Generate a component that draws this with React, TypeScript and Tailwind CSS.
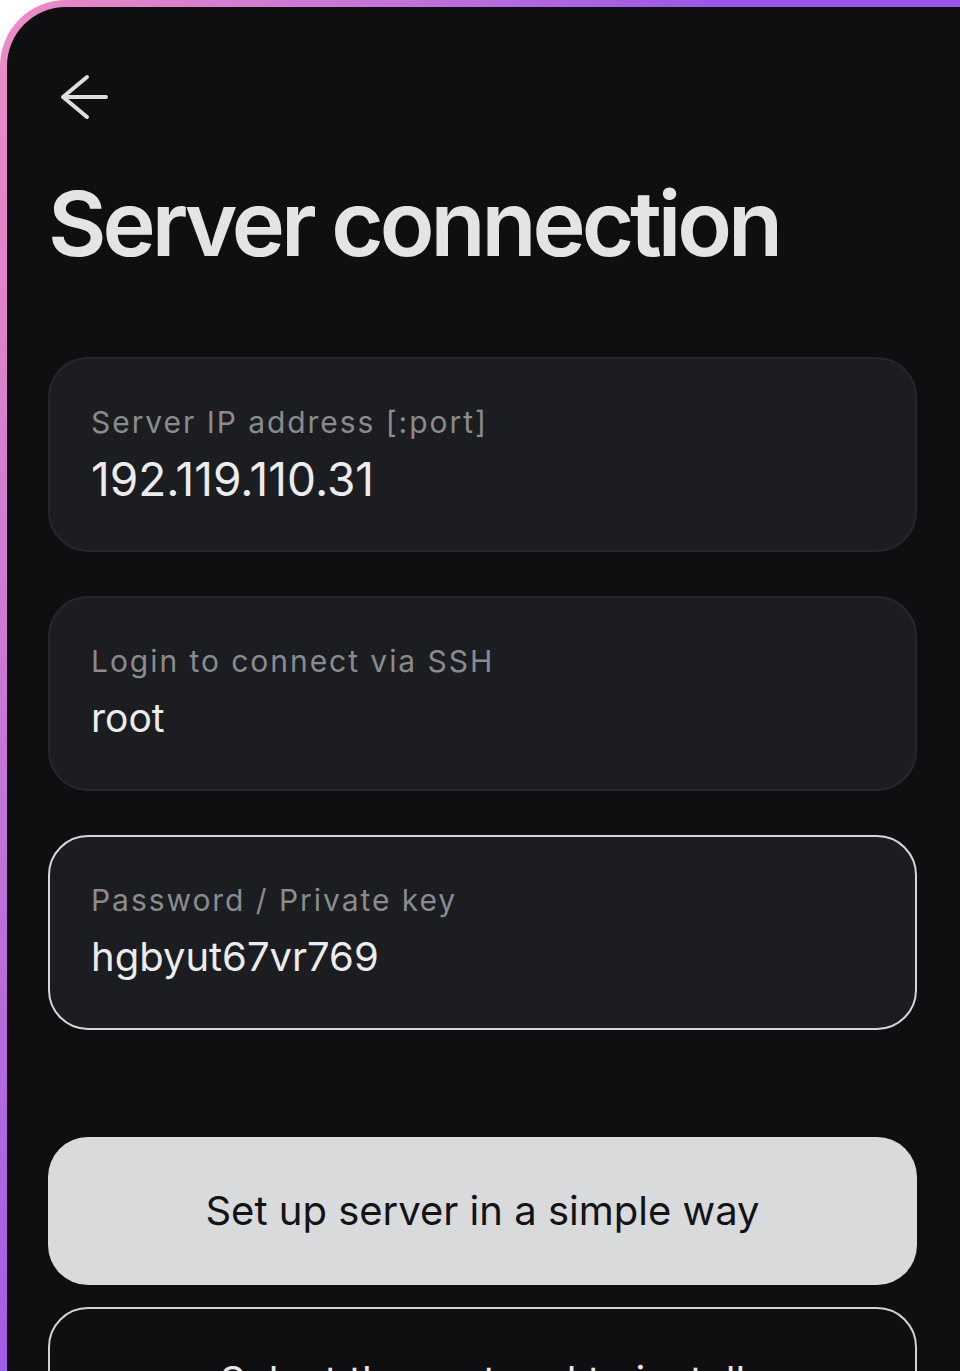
import type { ReactNode } from "react";

const font = { fontFamily: "Inter, 'Noto Sans', sans-serif" };

function Field({
  label,
  value,
  valueClass = "text-[39px]",
  active = false,
}: {
  label: string;
  value: string;
  valueClass?: string;
  active?: boolean;
}) {
  return (
    <div
      className={`h-[195px] rounded-[40px] border-2 bg-[#1c1d21] px-[41px] pt-[45px] ${
        active ? "border-[#d6d6d8]" : "border-[#26272b]"
      }`}
    >
      <div className="text-[30px] leading-[36px] tracking-[0.065em] text-[#8a8b8f]">
        {label}
      </div>
      <div className={`mt-[16px] leading-[46px] text-[#ececee] ${valueClass}`}>
        {value}
      </div>
    </div>
  );
}

function Button({ children, filled }: { children: ReactNode; filled?: boolean }) {
  return (
    <div
      className={`flex h-[148px] shrink-0 items-center justify-center rounded-[40px] text-[40px] ${
        filled
          ? "bg-[#d9dadc] text-[#131315]"
          : "border-2 border-[#d2d2d4] bg-[#0f0f11] text-[#e6e6e8]"
      }`}
    >
      {children}
    </div>
  );
}

export default function App() {
  return (
    <div className="h-[1371px] w-[960px] overflow-hidden bg-white" style={font}>
      <div className="h-full rounded-tl-[66px] bg-[radial-gradient(ellipse_720px_1500px_at_0_0,#ee8cc4,#c273d8_55%,#9a57e8)] pl-[7px] pt-[7px]">
        <div className="flex h-full flex-col rounded-tl-[59px] bg-[#0f0f11] pl-[41px] pr-[43px]">
          <svg
            className="ml-[8px] mt-[65px] shrink-0"
            width="54"
            height="50"
            viewBox="0 0 54 50"
            fill="none"
            stroke="#dedee0"
            strokeWidth="4"
            strokeLinecap="round"
            strokeLinejoin="round"
          >
            <path d="M31 5 L7 25 L31 45 M7 25 H50" />
          </svg>
          <h1 className="mt-[52px] text-[90px] font-semibold leading-[100px] tracking-[-0.045em] text-[#e4e4e6]">
            Server connection
          </h1>
          <div className="mt-[83px] flex flex-col gap-[44px]">
            <Field
              label="Server IP address [:port]"
              value="192.119.110.31"
              valueClass="text-[46px]"
            />
            <Field label="Login to connect via SSH" value="root" />
            <Field
              label="Password / Private key"
              value="hgbyut67vr769"
              valueClass="text-[40px]"
              active
            />
          </div>
          <div className="mt-[107px] flex flex-col gap-[22px]">
            <Button filled>Set up server in a simple way</Button>
            <Button>Select the protocol to install</Button>
          </div>
        </div>
      </div>
    </div>
  );
}
